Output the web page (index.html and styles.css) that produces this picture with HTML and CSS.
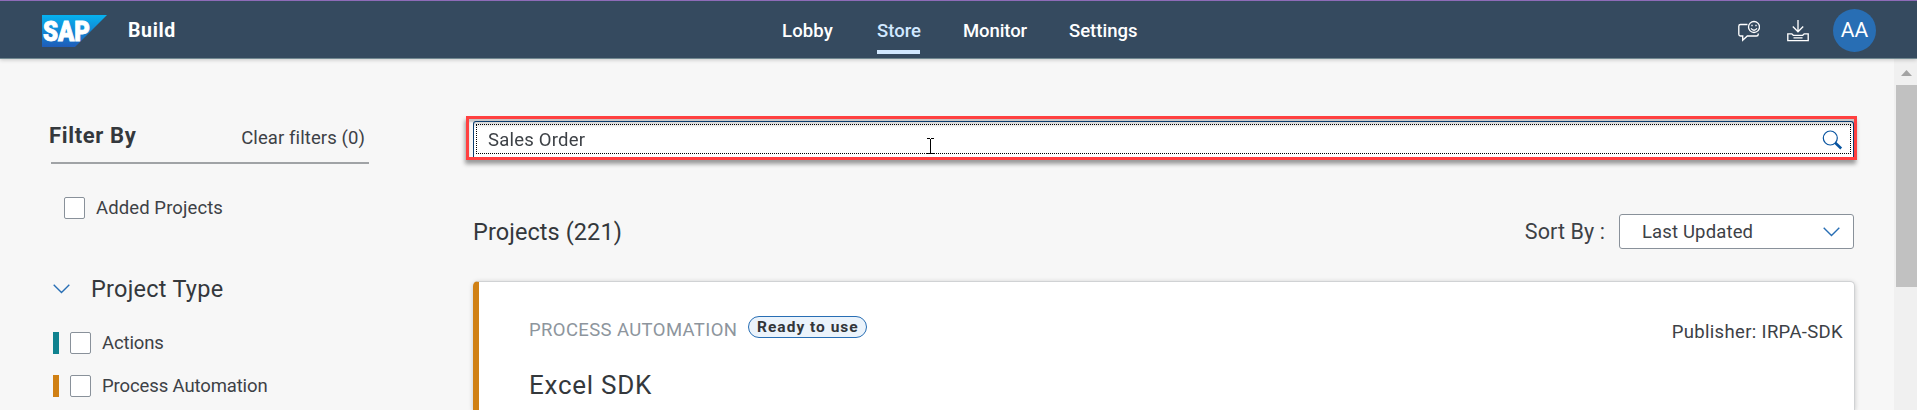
FILE: index.html
```html
<!DOCTYPE html>
<html lang="en">
<head>
<meta charset="utf-8">
<title>SAP Build - Store</title>
<link rel="stylesheet" href="styles.css">
</head>
<body>
<header class="shell">
  <div class="brand">
    <svg class="logo" width="65" height="32" viewBox="0 0 65 32">
      <defs><linearGradient id="g" x1="0" y1="0" x2="0" y2="1"><stop offset="0" stop-color="#06b2f0"/><stop offset="1" stop-color="#1f5cb8"/></linearGradient></defs>
      <path d="M0 0H65L33 32H0Z" fill="url(#g)"/>
      <text class="logo-text" x="1" y="25.5" textLength="47" lengthAdjust="spacingAndGlyphs">SAP</text>
    </svg>
    <span class="product">Build</span>
  </div>
  <nav class="nav">
    <a class="nav-item lobby">Lobby</a>
    <a class="nav-item store active">Store</a>
    <a class="nav-item monitor">Monitor</a>
    <a class="nav-item settings">Settings</a>
  </nav>
  <div class="tools">
    <svg class="tool" width="22" height="22" viewBox="0 0 22 22">
      <path d="M9.500 4.500H2.500Q.8 4.500 .8 6.200V14.300Q.8 16 2.500 16H4.700V20.300L9.300 16H18.500Q20.200 16 20.200 14.500V13.500"/>
      <circle cx="16" cy="7" r="5.500"/>
      <path d="M13 8.400Q16 12 19 8.400M14 4.800V6.200M18 4.800V6.200"/>
    </svg>
    <svg class="tool" width="22" height="22" viewBox="0 0 22 22">
      <path d="M11 0V11.500M5.800 6.500 11 11.700 16.200 6.500"/>
      <path d="M.8 13.800H4.800L6.300 15.300H15.700L17.200 13.800H21.200V20.600H.8ZM6.500 17.800H15.500"/>
    </svg>
    <span class="avatar">AA</span>
  </div>
</header>
<main class="page">
  <aside class="filters">
    <div class="filter-head"><h2 class="filter-title">Filter By</h2><a class="clear">Clear filters (0)</a></div>
    <label class="check added"><i class="box"></i><span class="t-added">Added Projects</span></label>
    <div class="group">
      <svg class="chevron" width="17" height="10" viewBox="0 0 17 10"><path d="M.7 .8 8.500 8.500 16.300 .8"/></svg>
      <h3 class="group-title">Project Type</h3>
    </div>
    <label class="check typed"><i class="bar teal"></i><i class="box"></i><span class="t-type">Actions</span></label>
    <label class="check typed"><i class="bar orange"></i><i class="box"></i><span class="t-type">Process Automation</span></label>
  </aside>
  <section class="content">
    <div class="highlight">
      <div class="search">
        <span class="query">Sales Order</span>
        <svg class="magnifier" width="21" height="20" viewBox="0 0 21 20"><circle cx="8.300" cy="8" r="7"/><path class="handle" d="M13.200 12.800 19.200 18.500"/></svg>
      </div>
      <svg class="cursor" width="7" height="16" viewBox="0 0 7 16"><path d="M0 .5H3M4 .5H7M3.500 1V15M0 15.500H3M4 15.500H7"/></svg>
    </div>
    <div class="list-head">
      <h2 class="count">Projects (221)</h2>
      <span class="sort">Sort By :</span>
      <div class="select"><span class="t-last">Last Updated</span><svg class="chevron" width="17" height="10" viewBox="0 0 17 10"><path d="M.7 .8 8.500 8.500 16.300 .8"/></svg></div>
    </div>
    <article class="card">
      <div class="card-top">
        <span class="kind">PROCESS AUTOMATION</span>
        <span class="badge">Ready to use</span>
        <span class="publisher">Publisher: IRPA-SDK</span>
      </div>
      <h3 class="card-title">Excel SDK</h3>
    </article>
  </section>
  <div class="scrollbar">
    <svg width="11" height="6" viewBox="0 0 11 6"><path d="M0 6 5.500 0 11 6Z" fill="#a3a3a3"/></svg>
    <div class="thumb"></div>
  </div>
</main>
</body>
</html>
```
FILE: styles.css
```css
* { box-sizing: border-box; }
html, body { margin: 0; height: 410px; overflow: hidden; }
body { background: #f7f7f7; color: #3d4146; font-family: Roboto, "Liberation Sans", sans-serif; font-size: 18.5px; white-space: nowrap; }
h2, h3 { margin: 0; font-weight: 400; color: #34383c; }
.shell { position: relative; z-index: 1; height: 59px; display: grid; grid-template-columns: 782px 1fr auto; background: #354a5f; border-top: 1px solid #8e6bb8; border-bottom: 1px solid #718890; box-shadow: 0 1px 4px rgba(0,0,0,.2); color: #fff; }
.brand { display: flex; padding: 14px 0 0 42px; gap: 21px; }
.logo-text { font: 900 27px Roboto, sans-serif; fill: #fff; stroke: #fff; stroke-width: .9; }
.product { font-weight: 700; font-size: 19.5px; line-height: 32px; letter-spacing: .65px; }
.nav { display: flex; }
.nav-item { height: 53px; padding-top: 14px; line-height: 32px; font-weight: 500; font-size: 18.5px; }
.lobby { width: 51px; margin-right: 44px; letter-spacing: .15px; }
.store { width: 43px; margin-right: 43px; }
.monitor { width: 62px; margin-right: 44px; letter-spacing: -.1px; }
.active { color: #d1e8ff; border-bottom: 4px solid #d1e8ff; border-radius: 2px 2px 0 0; }
.tools { display: flex; padding: 8px 41px 0 0; }
.tool { margin: 11px 26px 0 1px; fill: none; stroke: #fff; stroke-width: 1.35; }
.avatar { width: 43px; height: 43px; margin-left: -2px; border-radius: 50%; background: #286eb4; text-align: center; line-height: 43px; font-size: 21px; font-weight: 400; }
.page { display: flex; height: 351px; }
.filters { width: 466px; padding: 61px 0 0 51px; }
.filter-head { width: 318px; height: 44px; border-bottom: 2px solid #a0a3a6; display: flex; justify-content: space-between; padding: 0 4px 0 0; }
.filter-title { margin-left: -2px; font-size: 22px; font-weight: 700; line-height: 32px; letter-spacing: .65px; }
.clear { line-height: 36px; letter-spacing: .1px; }
.check { display: flex; align-items: center; height: 22px; }
.box { width: 21px; height: 22px; border: 1px solid #89919a; border-radius: 2px; background: #fff; }
.added { margin: 33px 0 0 13px; gap: 11px; letter-spacing: .1px; }
.group { display: flex; align-items: center; gap: 21px; height: 30px; margin: 55px 0 0 2px; }
.chevron { fill: none; stroke: #286eb4; stroke-width: 1.4; }
.group-title { font-size: 23.5px; letter-spacing: .25px; }
.typed { margin: 28px 0 0 2px; letter-spacing: -.12px; }
.typed + .typed { margin-top: 21px; }
.bar { width: 6px; height: 22px; margin-right: 11px; }
.typed .box { margin-right: 11px; }
.teal { background: #0f828f; }
.orange { background: #d08014; }
.content { width: 1391px; padding-top: 57px; }
.highlight { position: relative; height: 44px; border: 3px solid #ff4040; padding: 2px 0 0 4px; filter: drop-shadow(-1px 4px 2px rgba(0,0,0,.38)); background: #f7f7f7; box-shadow: inset 0 3px 2px rgba(0,0,0,.2); }
.search { height: 36px; border: 1px solid #0b3c6d; border-bottom: 0; border-radius: 3px 3px 0 0; padding: 0 10px 0 14px; display: flex; align-items: center; justify-content: space-between; background: linear-gradient(#d4d4d4, #fff 6px); outline: 1px dotted #000; outline-offset: -4px; }
.query { letter-spacing: .22px; }
.magnifier { fill: none; stroke: #0854a0; stroke-width: 1.2; }
.handle { stroke-width: 2.6; }
.cursor { position: absolute; left: 458px; top: 19px; fill: none; stroke: #000; }
.list-head { display: flex; align-items: center; height: 35px; margin: 54px 3px 0 7px; }
.count { font-size: 23.5px; flex: 1; letter-spacing: .08px; }
.sort { font-size: 21.5px; margin-right: 14px; letter-spacing: .1px; }
.select { width: 235px; height: 35px; border: 1px solid #89919a; border-radius: 3px; background: #fff; display: flex; align-items: center; justify-content: space-between; padding: 0 13px 0 22px; letter-spacing: .15px; }
.card { margin: 32px 2px 0 7px; height: 129px; border: 1px solid #d0d2d4; border-left: 6px solid #d08014; border-bottom: 0; border-radius: 5px 5px 0 0; background: #fff; box-shadow: 0 1px 5px rgba(0,0,0,.2); padding: 34px 11px 0 50px; }
.card-top { display: flex; height: 30px; }
.kind { color: #8d959d; line-height: 28px; margin-right: 11px; letter-spacing: .38px; }
.badge { width: 119px; height: 22px; border: 1px solid #286eb4; border-radius: 11px; background: #ebf3fb; text-align: center; font-size: 15.5px; font-weight: 700; line-height: 21px; letter-spacing: 1px; color: #32363a; }
.publisher { margin-left: auto; line-height: 33px; letter-spacing: .34px; }
.card-title { font-size: 26px; line-height: 34px; margin-top: 22px; letter-spacing: .75px; }
.scrollbar { width: 23px; margin-left: 37px; background: #f0f0f0; padding: 11px 0 0 2px; display: flex; flex-direction: column; }
.scrollbar svg { margin-left: 5px; }
.thumb { height: 202px; margin-top: 9px; background: #c1c1c1; }
```
